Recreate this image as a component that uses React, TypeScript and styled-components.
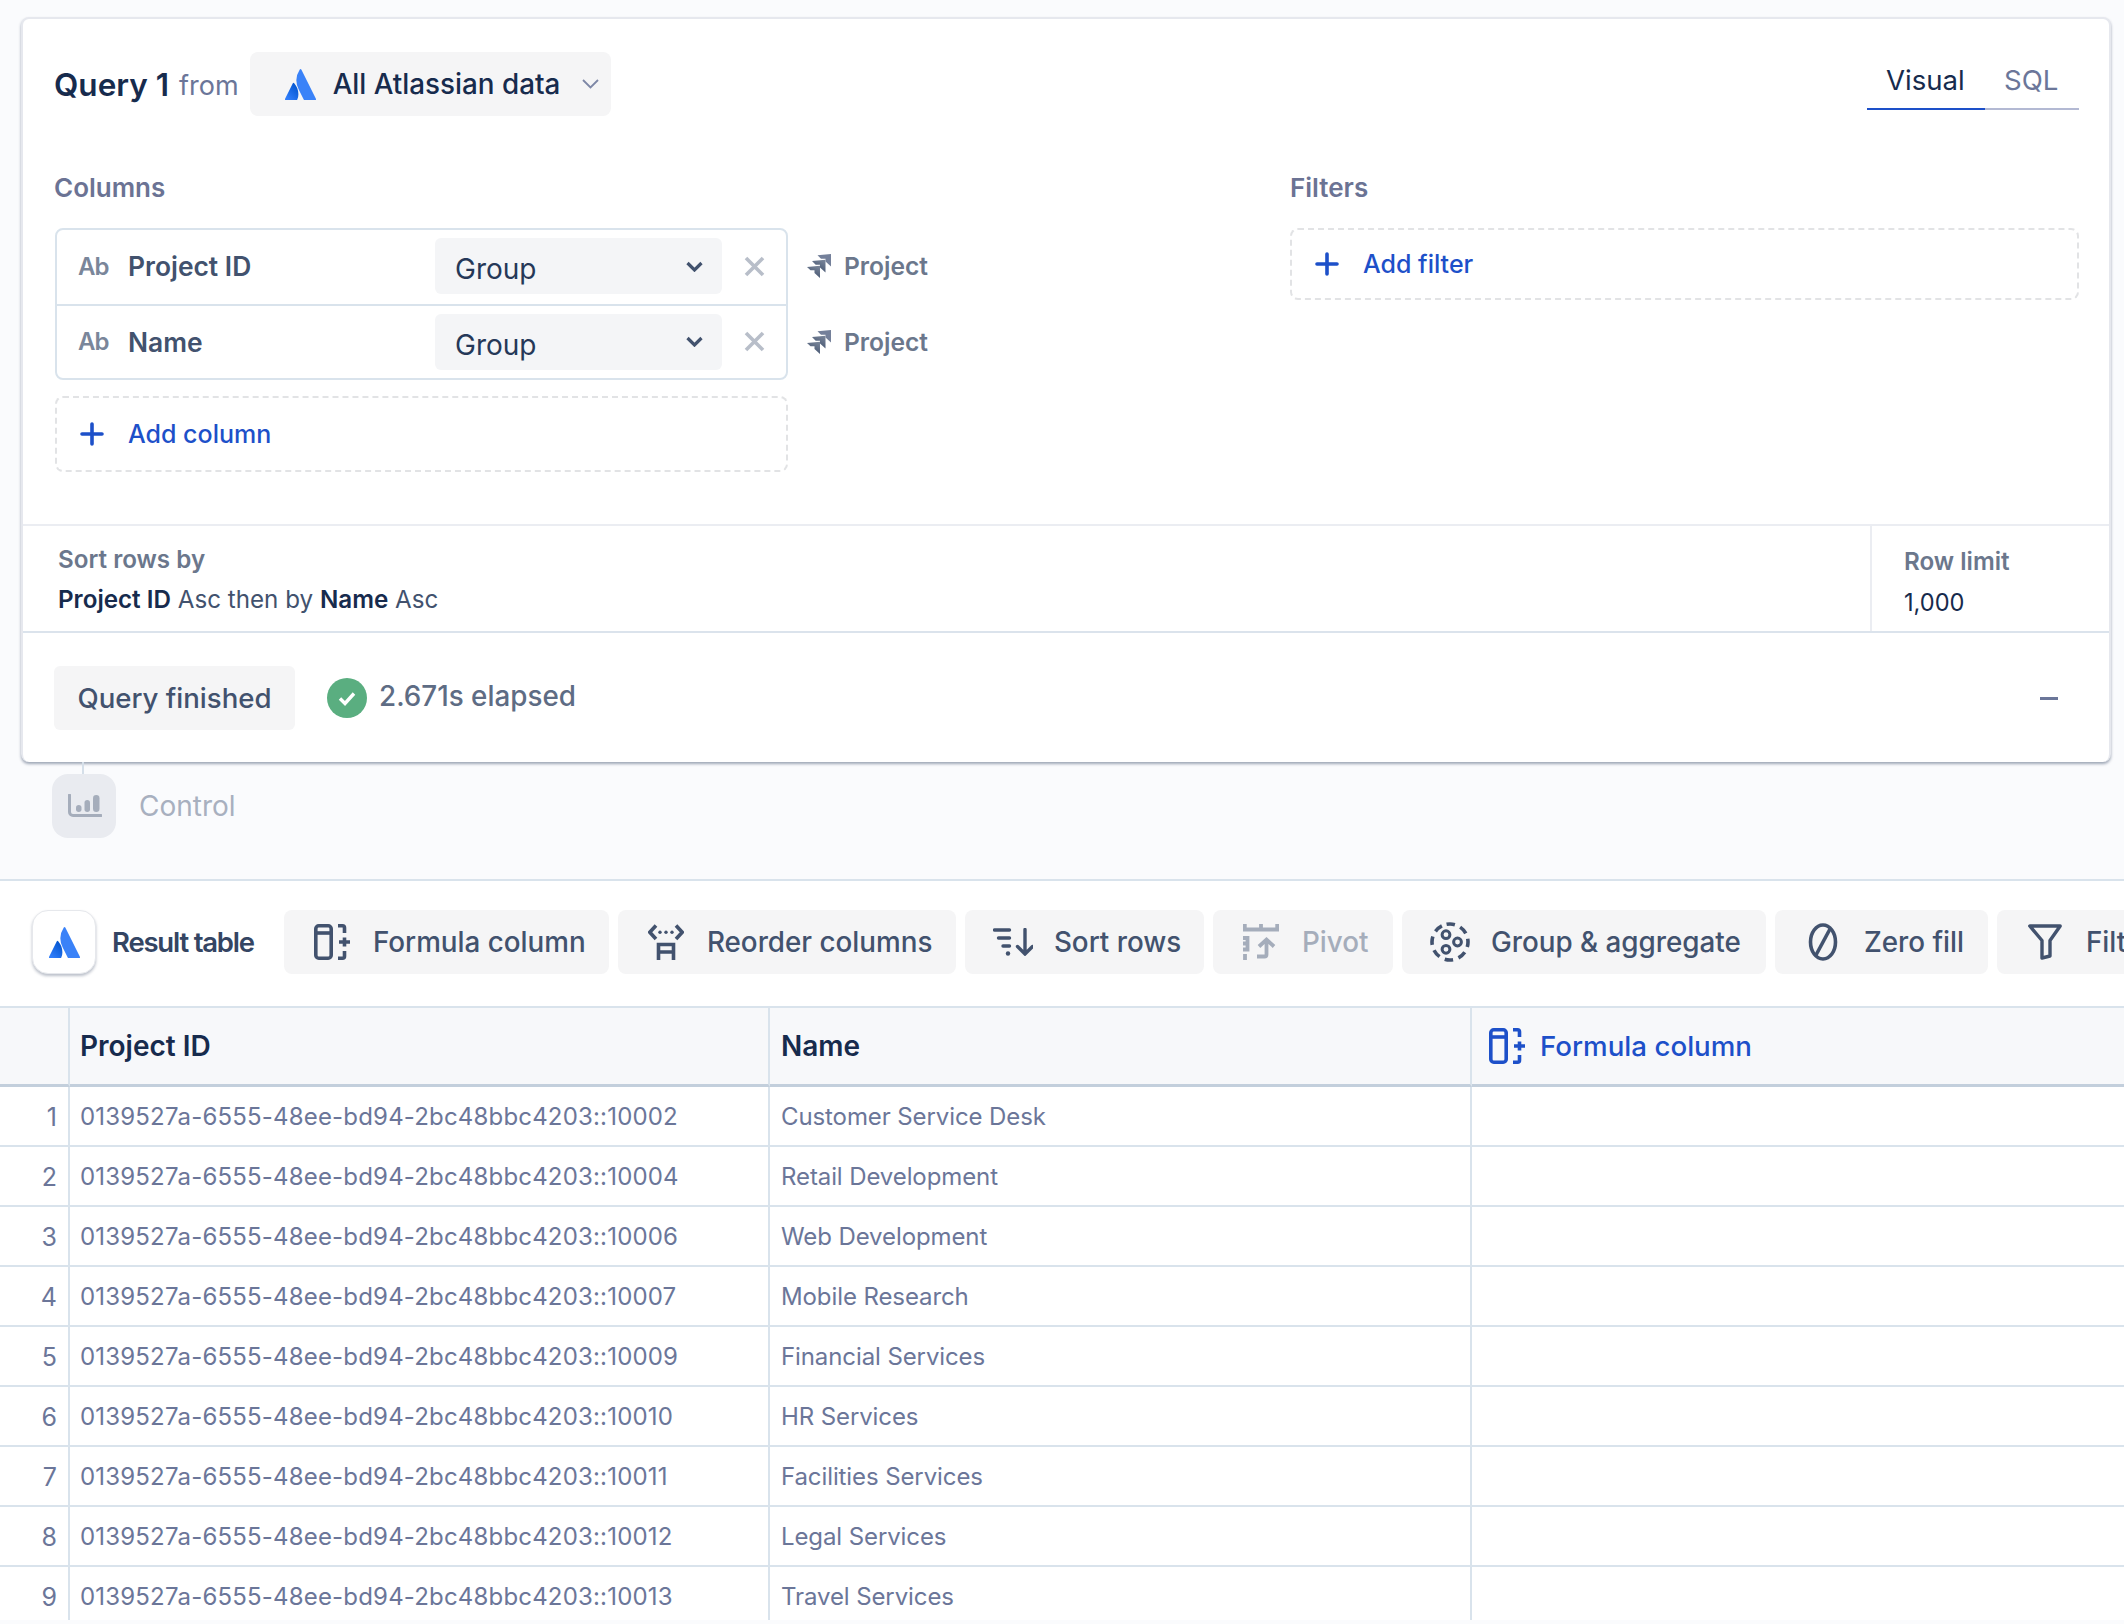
import React from "react";
import styled, { createGlobalStyle } from "styled-components";

const GlobalStyle = createGlobalStyle`
  * {
    box-sizing: border-box;
  }
  html, body {
    margin: 0;
    padding: 0;
    background: #fafbfd;
    font-family: Inter, "Liberation Sans", sans-serif;
    -webkit-font-smoothing: antialiased;
  }
`;

const rows = [
  ["0139527a-6555-48ee-bd94-2bc48bbc4203::10002", "Customer Service Desk"],
  ["0139527a-6555-48ee-bd94-2bc48bbc4203::10004", "Retail Development"],
  ["0139527a-6555-48ee-bd94-2bc48bbc4203::10006", "Web Development"],
  ["0139527a-6555-48ee-bd94-2bc48bbc4203::10007", "Mobile Research"],
  ["0139527a-6555-48ee-bd94-2bc48bbc4203::10009", "Financial Services"],
  ["0139527a-6555-48ee-bd94-2bc48bbc4203::10010", "HR Services"],
  ["0139527a-6555-48ee-bd94-2bc48bbc4203::10011", "Facilities Services"],
  ["0139527a-6555-48ee-bd94-2bc48bbc4203::10012", "Legal Services"],
  ["0139527a-6555-48ee-bd94-2bc48bbc4203::10013", "Travel Services"],
];

/* icons */
const AtlassianMark = ({ id, size }: { id: string; size: number }) => (
  <svg width={size} height={size} viewBox="0 0 24 24">
    <defs>
      <linearGradient id={id} x1="1" y1="0.15" x2="0.3" y2="1">
        <stop offset="0" stopColor="#0052cc" />
        <stop offset="1" stopColor="#2f7dfa" />
      </linearGradient>
    </defs>
    <path
      fill={`url(#${id})`}
      d="M7.12 11.084a.683.683 0 00-1.16.126L.075 22.974a.703.703 0 00.63 1.018h8.19a.678.678 0 00.63-.39c1.767-3.65.696-9.203-2.406-12.52z"
    />
    <path
      fill="#3a82f8"
      d="M11.434.386a15.515 15.515 0 00-.906 15.317l3.95 7.9a.703.703 0 00.628.388h8.19a.703.703 0 00.63-1.017L12.63.38a.664.664 0 00-1.196.006z"
    />
  </svg>
);

const JiraIcon = ({ id }: { id: string }) => (
  <svg width="24" height="24" viewBox="0 0 24 24">
    <defs>
      <linearGradient id={id} x1="0.9" y1="0" x2="0.4" y2="1">
        <stop offset="0" stopColor="#7a869a" />
        <stop offset="1" stopColor="#42526e" />
      </linearGradient>
    </defs>
    <path fill="#74809a" d="M10.500 1.200L24 0v12.500l-5.500-5V4.700H14z" />
    <path fill={`url(#${id})`} d="M5 7l13.500-1.200v12.700l-5.500-5v-2.800H8.700z" />
    <path fill={`url(#${id})`} d="M0 13l13-1.200V24l-5.500-5v-2.800H3.500z" />
  </svg>
);

const FormulaIcon = () => (
  <svg width="36" height="36" viewBox="0 0 36 36" fill="none" stroke="currentColor" strokeWidth="3.6">
    <rect x="1.8" y="1.8" width="15.4" height="32.4" rx="3" />
    <path d="M2 9h15" />
    <path d="M24 1.8h4.500a2 2 0 012 2v5.200M24 34.200h4.500a2 2 0 002-2V27" />
    <path d="M25 18h11M30.500 13.500v9" />
  </svg>
);

const ReorderIcon = () => (
  <svg width="36" height="36" viewBox="0 0 36 36" fill="none" stroke="currentColor" strokeWidth="3.6">
    <path d="M8 1.500L1.800 8.200 8 15M28 1.500l6.200 6.700L28 15" />
    <path d="M10.500 36V20.500h15V36M10.500 28h15" />
    <circle cx="12" cy="8.200" r="1.700" fill="currentColor" stroke="none" />
    <circle cx="18" cy="8.200" r="1.700" fill="currentColor" stroke="none" />
    <circle cx="24" cy="8.200" r="1.700" fill="currentColor" stroke="none" />
  </svg>
);

const SortIcon = () => (
  <svg width="40" height="28" viewBox="0 0 40 28" fill="none" stroke="currentColor" strokeWidth="3.4" strokeLinecap="round">
    <path d="M1.500 2h15M5.500 10h11M10 18h6.500" />
    <circle cx="15" cy="25.500" r="2.200" fill="currentColor" stroke="none" />
    <path d="M32 1.500v24M24.500 18.500l7.500 7.500 7.500-7.500" />
  </svg>
);

const PivotIcon = () => (
  <svg width="36" height="36" viewBox="0 0 36 36" fill="none" stroke="currentColor" strokeWidth="3.8">
    <path d="M0 5.500h36M1.800 0v5M18 0v5M34.200 0v5" />
    <path d="M0 14h4.500v11.500H0M0 19.500h4.500M2 30v6" />
    <path d="M14 32.500h7.500a2 2 0 002-2V16M16 22.500l7.500-7 7.500 7" />
  </svg>
);

const GroupIcon = () => (
  <svg width="40" height="40" viewBox="0 0 40 40" fill="none" stroke="currentColor">
    <circle cx="20" cy="20" r="18" strokeWidth="3.6" strokeDasharray="8.4 5.74" transform="rotate(-101 20 20)" />
    <circle cx="16" cy="12.700" r="3.900" strokeWidth="3" />
    <circle cx="27.500" cy="20" r="3.900" strokeWidth="3" />
    <circle cx="16" cy="27.300" r="3.900" strokeWidth="3" />
  </svg>
);

const ZeroIcon = () => (
  <svg width="30" height="38" viewBox="0 0 30 38" fill="none" stroke="currentColor" strokeWidth="3.6">
    <ellipse cx="15" cy="19" rx="12.500" ry="17" />
    <path d="M22 6L8 32" />
  </svg>
);

const FilterIcon = () => (
  <svg width="34" height="36" viewBox="0 0 34 36" fill="none" stroke="currentColor" strokeWidth="3.4" strokeLinejoin="round">
    <path d="M1.800 2h30.400L22 16.500v15.500l-8 2V16.500z" />
  </svg>
);

const ChartIcon = () => (
  <svg width="34" height="24" viewBox="0 0 34 24" fill="none">
    <path d="M1.500 1v17a3.500 3.500 0 003.500 3.500h28" stroke="currentColor" strokeWidth="3" strokeLinecap="round" />
    <rect x="8" y="11" width="5.500" height="7" rx="2.750" fill="currentColor" />
    <rect x="16.500" y="6" width="5.500" height="12" rx="2.750" fill="currentColor" />
    <rect x="25" y="1" width="6.500" height="17" rx="3.250" fill="currentColor" />
  </svg>
);

const PlusIcon = () => (
  <svg width="24" height="24" viewBox="0 0 24 24" fill="none" stroke="currentColor" strokeWidth="3.600" strokeLinecap="round">
    <path d="M12 2v20M2 12h20" />
  </svg>
);

const CloseIcon = () => (
  <svg width="21" height="21" viewBox="0 0 21 21" fill="none" stroke="currentColor" strokeWidth="3.600">
    <path d="M2 2l17 17M19 2L2 19" />
  </svg>
);

const SelectChevron = () => (
  <svg width="17" height="11" viewBox="0 0 17 11" fill="none" stroke="currentColor" strokeWidth="3.200">
    <path d="M1.500 2l7 7 7-7" />
  </svg>
);

const ThinChevron = () => (
  <svg width="17" height="10" viewBox="0 0 17 10" fill="none" stroke="currentColor" strokeWidth="1.800">
    <path d="M1 1l7.500 7.500L16 1" />
  </svg>
);

const CheckBadge = () => (
  <svg width="40" height="40" viewBox="0 0 40 40">
    <circle cx="20" cy="20" r="20" fill="#5aae80" />
    <path d="M13 20.500l5 5 9-10" fill="none" stroke="#fff" strokeWidth="3.400" />
  </svg>
);

const App = () => (
  <Page>
    <GlobalStyle />
    <QueryCard>
      <BuilderPane>
        <CardHeader>
          <QueryTitle>Query 1</QueryTitle>
          <FromWord>from</FromWord>
          <SourcePicker>
            <AtlassianMark id="atl-source" size={31} />
            <SourceName>All Atlassian data</SourceName>
            <SourceChevron>
              <ThinChevron />
            </SourceChevron>
          </SourcePicker>
          <Tabs>
            <Tab active>Visual</Tab>
            <Tab>SQL</Tab>
          </Tabs>
        </CardHeader>

        <BuilderGrid>
          <div>
            <SectionLabel>Columns</SectionLabel>
            <ColumnArea>
              <ColumnBox>
                {["Project ID", "Name"].map((name) => (
                  <ColumnRow key={name}>
                    <TypeBadge>Ab</TypeBadge>
                    <ColumnName>{name}</ColumnName>
                    <GroupSelect>
                      <GroupValue>Group</GroupValue>
                      <SelectChevron />
                    </GroupSelect>
                    <RemoveButton>
                      <CloseIcon />
                    </RemoveButton>
                  </ColumnRow>
                ))}
              </ColumnBox>
              <SourceTags>
                {["a", "b"].map((key) => (
                  <SourceTag key={key}>
                    <JiraIcon id={`jira-${key}`} />
                    Project
                  </SourceTag>
                ))}
              </SourceTags>
            </ColumnArea>
            <AddColumnBox>
              <PlusIcon />
              Add column
            </AddColumnBox>
          </div>
          <div>
            <SectionLabel>Filters</SectionLabel>
            <AddFilterBox>
              <PlusIcon />
              Add filter
            </AddFilterBox>
          </div>
        </BuilderGrid>
      </BuilderPane>

      <SortBar>
        <SortInfo>
          <SortTitle>Sort rows by</SortTitle>
          <SortValue>
            <b>Project ID</b> Asc then by <b>Name</b> Asc
          </SortValue>
        </SortInfo>
        <RowLimit>
          <RowLimitTitle>Row limit</RowLimitTitle>
          <RowLimitValue>1,000</RowLimitValue>
        </RowLimit>
      </SortBar>

      <StatusBar>
        <StatusPill>Query finished</StatusPill>
        <CheckBadge />
        <Elapsed>2.671s elapsed</Elapsed>
        <CollapseDash />
      </StatusBar>
    </QueryCard>

    <Connector />
    <ControlRow>
      <ControlIconBox>
        <ChartIcon />
      </ControlIconBox>
      Control
    </ControlRow>

    <ResultPanel>
      <Toolbar>
        <ResultLogoBox>
          <AtlassianMark id="atl-result" size={31} />
        </ResultLogoBox>
        <ResultLabel>Result table</ResultLabel>
        <ToolButton width={325}>
          <ToolIcon>
            <FormulaIcon />
          </ToolIcon>
          Formula column
        </ToolButton>
        <ToolButton width={338}>
          <ToolIcon>
            <ReorderIcon />
          </ToolIcon>
          Reorder columns
        </ToolButton>
        <ToolButton width={239}>
          <ToolIcon>
            <SortIcon />
          </ToolIcon>
          Sort rows
        </ToolButton>
        <ToolButton width={180} disabled>
          <ToolIcon>
            <PivotIcon />
          </ToolIcon>
          Pivot
        </ToolButton>
        <ToolButton width={364}>
          <ToolIcon>
            <GroupIcon />
          </ToolIcon>
          Group &amp; aggregate
        </ToolButton>
        <ToolButton width={213}>
          <ToolIcon>
            <ZeroIcon />
          </ToolIcon>
          Zero fill
        </ToolButton>
        <ToolButton width={180}>
          <ToolIcon>
            <FilterIcon />
          </ToolIcon>
          Filter
        </ToolButton>
      </Toolbar>

      <Table>
        <HeadCell />
        <HeadCell>Project ID</HeadCell>
        <NameHead>Name</NameHead>
        <FormulaHead>
          <FormulaIcon />
          Formula column
        </FormulaHead>
        {rows.map(([id, name], index) => (
          <React.Fragment key={id}>
            <IndexCell>{index + 1}</IndexCell>
            <IdCell>{id}</IdCell>
            <NameCell>{name}</NameCell>
            <BodyCell />
          </React.Fragment>
        ))}
      </Table>
    </ResultPanel>
  </Page>
);

const Page = styled.div`
  width: 2124px;
  height: 1624px;
  overflow: hidden;
  display: flex;
  flex-direction: column;
  background: #fafbfd;
  padding-bottom: 4px;
`;

const QueryCard = styled.section`
  flex-shrink: 0;
  width: 2090px;
  height: 745px;
  margin: 17px 0 0 21px;
  background: #fff;
  border: 2px solid #e6e8ee;
  border-bottom: 0;
  border-radius: 8px;
  box-shadow: 0 2px 3px rgba(9, 30, 66, 0.38);
`;

const BuilderPane = styled.div`
  height: 505px;
  padding: 33px 30px 0 31px;
`;

const CardHeader = styled.header`
  display: flex;
  align-items: center;
  height: 64px;
`;

const QueryTitle = styled.span`
  font-size: 31.5px;
  font-weight: 600;
  color: #172b4d;
`;

const FromWord = styled.span`
  margin-left: 10px;
  margin-top: 3px;
  font-size: 27px;
  color: #6b7699;
`;

const SourcePicker = styled.div`
  display: flex;
  align-items: center;
  width: 361px;
  height: 64px;
  margin-left: 11px;
  padding-left: 35px;
  background: #f5f5f6;
  border-radius: 8px;
`;

const SourceName = styled.span`
  margin-left: 17px;
  font-size: 27.8px;
  font-weight: 500;
  color: #172b4d;
`;

const SourceChevron = styled.span`
  display: flex;
  margin-left: 22px;
  color: #7d87a6;
`;

const Tabs = styled.div`
  display: flex;
  margin-left: auto;
  margin-top: -3px;
  height: 55px;
`;

const Tab = styled.div<{ active?: boolean }>`
  padding: 0 19px;
  width: ${(props) => (props.active ? "118px" : "94px")};
  line-height: 50px;
  font-size: 27.6px;
  color: ${(props) => (props.active ? "#172b4d" : "#6b7699")};
  border-bottom: 2.5px solid ${(props) => (props.active ? "#1d50c9" : "#b3b9d3")};
`;

const BuilderGrid = styled.div`
  display: grid;
  grid-template-columns: 1236px 1fr;
  margin-top: 57px;
`;

const SectionLabel = styled.div`
  height: 30px;
  line-height: 30px;
  margin-bottom: 25px;
  font-size: 26px;
  font-weight: 600;
  color: #6b7394;
`;

const ColumnArea = styled.div`
  display: flex;
  margin-left: 1px;
`;

const ColumnBox = styled.div`
  width: 733px;
  border: 2px solid #d9e3ec;
  border-radius: 8px;
`;

const ColumnRow = styled.div`
  display: flex;
  align-items: center;
  height: 74px;
  padding: 0 21px 2px 21px;

  & + & {
    height: 73px;
    padding-bottom: 0;
    border-top: 2px solid #d9e3ec;
  }
`;

const TypeBadge = styled.span`
  width: 50px;
  flex-shrink: 0;
  font-size: 24px;
  font-weight: 600;
  letter-spacing: -1px;
  color: #7a869a;
`;

const ColumnName = styled.span`
  flex: 1;
  font-size: 26.4px;
  font-weight: 600;
  color: #42526e;
`;

const GroupSelect = styled.div`
  display: flex;
  align-items: center;
  justify-content: space-between;
  width: 287px;
  height: 56px;
  padding: 0 19px 0 20px;
  background: #f4f5f7;
  border-radius: 6px;
  color: #42526e;
`;

const GroupValue = styled.span`
  padding-top: 6px;
  font-size: 28px;
  color: #253858;
`;

const RemoveButton = styled.span`
  display: flex;
  margin-left: 22px;
  color: #b8bec9;
`;

const SourceTags = styled.div`
  display: flex;
  flex-direction: column;
  margin-left: 19px;
`;

const SourceTag = styled.div`
  display: flex;
  align-items: center;
  gap: 13px;
  height: 76px;
  font-size: 24.6px;
  font-weight: 600;
  color: #6b778c;
`;

const AddBox = styled.div`
  display: flex;
  align-items: center;
  gap: 24px;
  border: 2px dashed #e2e3e5;
  border-radius: 8px;
  font-size: 25px;
  font-weight: 500;
  color: #1d50c9;
`;

const AddColumnBox = styled(AddBox)`
  width: 733px;
  height: 76px;
  margin: 16px 0 0 1px;
  padding-left: 23px;
`;

const AddFilterBox = styled(AddBox)`
  height: 72px;
  padding-left: 23px;
`;

const SortBar = styled.div`
  display: flex;
  height: 109px;
  border-top: 2px solid #ebedf2;
  border-bottom: 2px solid #dbe3ec;
`;

const SortInfo = styled.div`
  flex: 1;
  padding: 14px 0 0 35px;
`;

const SortTitle = styled.div`
  line-height: 40px;
  font-size: 24.2px;
  font-weight: 600;
  color: #6b778c;
`;

const SortValue = styled.div`
  line-height: 40px;
  font-size: 24.2px;
  color: #42526e;

  b {
    font-weight: 600;
    color: #172b4d;
  }
`;

const RowLimit = styled.div`
  width: 239px;
  padding: 16px 0 0 32px;
  border-left: 2px solid #ebedf2;
`;

const RowLimitTitle = styled(SortTitle)``;

const RowLimitValue = styled.div`
  line-height: 42px;
  font-size: 23.6px;
  color: #172b4d;
`;

const StatusBar = styled.div`
  display: flex;
  align-items: center;
  height: 129px;
  padding: 0 51px 0 31px;
`;

const StatusPill = styled.div`
  display: flex;
  align-items: center;
  justify-content: center;
  width: 241px;
  height: 64px;
  margin-right: 32px;
  background: #f5f5f6;
  border-radius: 6px;
  font-size: 27.6px;
  font-weight: 500;
  color: #42526e;
`;

const Elapsed = styled.span`
  margin: -3px 0 0 12px;
  font-size: 27.8px;
  font-weight: 500;
  color: #5e6c84;
`;

const CollapseDash = styled.span`
  width: 18px;
  height: 2.5px;
  margin: 2px 0 0 auto;
  background: #6b7699;
`;

const Connector = styled.div`
  flex-shrink: 0;
  width: 2px;
  height: 12px;
  margin-left: 82px;
  background: #d5dfe9;
`;

const ControlRow = styled.div`
  flex-shrink: 0;
  display: flex;
  align-items: center;
  gap: 23px;
  height: 64px;
  margin: 0 0 41px 52px;
  font-size: 28px;
  color: #a8b0bf;
`;

const ControlIconBox = styled.div`
  display: flex;
  align-items: center;
  justify-content: center;
  width: 64px;
  height: 64px;
  padding-left: 2px;
  background: #e9ebf0;
  border-radius: 16px;
  color: #a5adbb;
`;

const ResultPanel = styled.section`
  flex: 1;
  min-height: 0;
  overflow: hidden;
  background: #fff;
  border-top: 2px solid #d9e3ec;
`;

const Toolbar = styled.div`
  display: flex;
  align-items: center;
  gap: 9px;
  height: 125px;
  padding: 0 0 3px 32px;
  overflow: hidden;
`;

const ResultLogoBox = styled.div`
  flex-shrink: 0;
  display: flex;
  align-items: center;
  justify-content: center;
  width: 64px;
  height: 64px;
  background: #fff;
  border: 1px solid #e6e8ec;
  border-radius: 16px;
  box-shadow: 0 2px 3px rgba(9, 30, 66, 0.28);
`;

const ResultLabel = styled.span`
  flex-shrink: 0;
  margin: 0 21px 0 7px;
  font-size: 27.5px;
  font-weight: 600;
  letter-spacing: -1.2px;
  color: #344563;
`;

const ToolButton = styled.div<{ disabled?: boolean; width: number }>`
  flex-shrink: 0;
  display: flex;
  align-items: center;
  gap: 17px;
  width: ${(props) => props.width}px;
  height: 64px;
  padding: 0 0 0 24px;
  background: #f5f5f6;
  border-radius: 8px;
  font-size: 27.8px;
  font-weight: 500;
  color: ${(props) => (props.disabled ? "#a5adbb" : "#42526e")};
`;

const ToolIcon = styled.span`
  display: flex;
  align-items: center;
  justify-content: center;
  width: 48px;
`;

const Table = styled.div`
  display: grid;
  grid-template-columns: 70px 700px 702px 1fr;
  grid-auto-rows: 60px;
  grid-template-rows: 79px;
  border-top: 2px solid #d9e3ec;
`;

const Cell = styled.div`
  display: flex;
  align-items: center;
  padding-left: 10px;
  border-right: 2px solid #d9e3ec;
  border-bottom: 2px solid #d9e3ec;

  &:nth-child(4n) {
    border-right: 0;
  }
`;

const HeadCell = styled(Cell)`
  background: #f7f8fa;
  border-bottom: 3px solid #c3cfdc;
  font-size: 28px;
  font-weight: 600;
  color: #172b4d;
`;

const NameHead = styled(HeadCell)`
  padding-left: 11px;
`;

const FormulaHead = styled(HeadCell)`
  gap: 15px;
  padding-left: 17px;
  font-size: 27.7px;
  font-weight: 500;
  color: #1d50c9;
`;

const BodyCell = styled(Cell)`
  padding-top: 1px;
  font-size: 24px;
  color: #6b7699;
`;

const IdCell = styled(BodyCell)`
  letter-spacing: 0.18px;
`;

const NameCell = styled(BodyCell)`
  padding-left: 11px;
  letter-spacing: -0.1px;
`;

const IndexCell = styled(BodyCell)`
  justify-content: flex-end;
  padding: 1px 11px 0 0;
  font-size: 25px;
`;

export default App;
